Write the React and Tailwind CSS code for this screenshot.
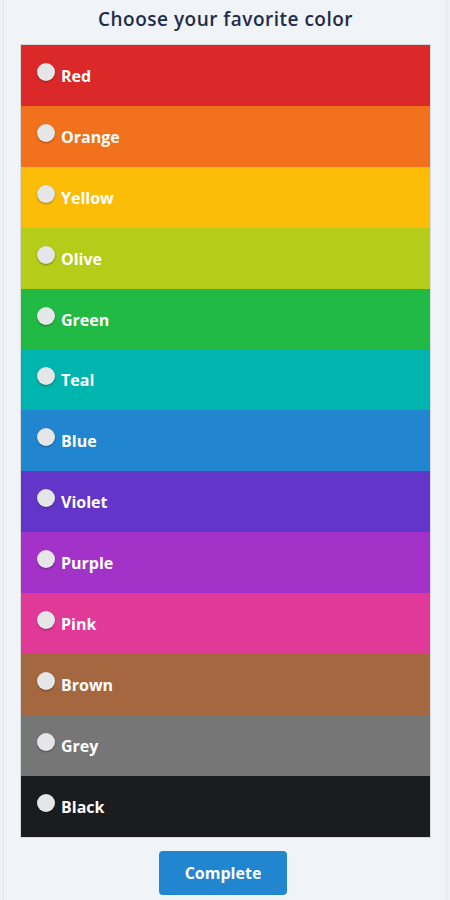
const COLORS = [
  { name: "Red", bg: "bg-[#db2828]" },
  { name: "Orange", bg: "bg-[#f2711c]" },
  { name: "Yellow", bg: "bg-[#fbbd08]" },
  { name: "Olive", bg: "bg-[#b5cc18]" },
  { name: "Green", bg: "bg-[#21ba45]" },
  { name: "Teal", bg: "bg-[#00b5ad]" },
  { name: "Blue", bg: "bg-[#2185d0]" },
  { name: "Violet", bg: "bg-[#6435c9]" },
  { name: "Purple", bg: "bg-[#a333c8]" },
  { name: "Pink", bg: "bg-[#e03997]" },
  { name: "Brown", bg: "bg-[#a5673f]" },
  { name: "Grey", bg: "bg-[#767676]" },
  { name: "Black", bg: "bg-[#1b1c1d]" },
];

export default function App() {
  return (
    <div className="min-h-[900px] bg-[#eef2f6] px-[3px] font-['Open_Sans','Noto_Sans',sans-serif]">
      <div className="min-h-[900px] border-x border-[#e3e8ee] bg-[#f0f3f7] pl-[16px] pr-[15px]">
        <h1 className="h-[44px] pt-[6px] text-center text-[19px] font-semibold leading-[26px] tracking-[0.5px] text-[#1f2b4a]">
          Choose your favorite color
        </h1>
        <div className="flex flex-col border border-black/10">
          {COLORS.map((c) => (
            <label key={c.name} className={`flex h-[60.9px] items-start gap-[6px] pl-[16px] pt-[17px] ${c.bg}`}>
              <span className="mt-[1px] h-[18px] w-[18px] shrink-0 rounded-full bg-[#e4e6e8] shadow-[0_1px_2px_rgba(0,0,0,0.35)]" />
              <span className="mt-[4px] text-[16px] font-bold leading-[20px] text-white">{c.name}</span>
            </label>
          ))}
        </div>
        <div className="flex justify-center pr-[5px] pt-[13px]">
          <button className="h-[44px] w-[128px] rounded-[4px] bg-[#2185d0] text-[16px] font-bold text-white">
            Complete
          </button>
        </div>
      </div>
    </div>
  );
}
